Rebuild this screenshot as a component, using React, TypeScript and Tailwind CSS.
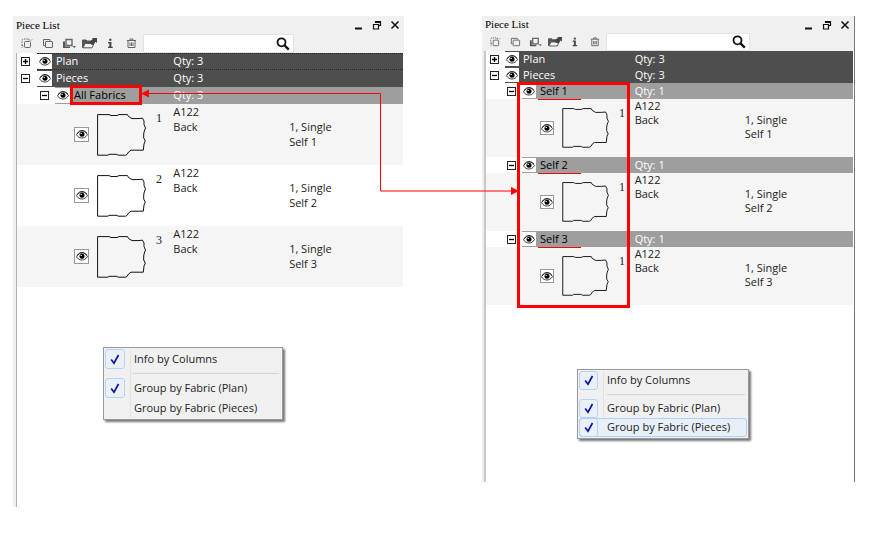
import React, { useState } from 'react';
import { clsx } from 'clsx';

interface Piece {
  id: string;
  order: number;
  name: string;
  part: string;
  quantity: string;
  fabric: string;
}

interface FabricGroup {
  name: string;
  qty: number;
  pieces: Piece[];
}

interface MenuOption {
  label: string;
  checked: boolean;
  active?: boolean;
}

const makePiece = (order: number, fabricNo: number): Piece => ({
  id: `piece-${order}-${fabricNo}`,
  order,
  name: 'A122',
  part: 'Back',
  quantity: '1, Single',
  fabric: `Self ${fabricNo}`,
});

const ALL_FABRICS: FabricGroup[] = [
  { name: 'All Fabrics', qty: 3, pieces: [makePiece(1, 1), makePiece(2, 2), makePiece(3, 3)] },
];

const BY_FABRIC: FabricGroup[] = [
  { name: 'Self 1', qty: 1, pieces: [makePiece(1, 1)] },
  { name: 'Self 2', qty: 1, pieces: [makePiece(1, 2)] },
  { name: 'Self 3', qty: 1, pieces: [makePiece(1, 3)] },
];

const EyeIcon = () => (
  <svg viewBox="0 0 12 9" className="w-3 h-[9px]" aria-hidden="true">
    <path d="M0.5 4.8C2.5 1.8 4.2 1 6 1s3.8 0.8 5.5 3.6C9.8 7.2 8 8 6 8S2.2 7.4 0.5 4.8Z" fill="#fff" stroke="#111" strokeWidth="0.8" />
    <path d="M1 3.4C3 0.9 4.4 0.5 6 0.5s3.4 0.6 5 2.6" fill="none" stroke="#111" strokeWidth="0.8" />
    <circle cx="6" cy="4.3" r="2.5" fill="#000" />
    <circle cx="5.2" cy="3.4" r="0.7" fill="#fff" />
  </svg>
);

const SearchIcon = () => (
  <svg viewBox="0 0 14 14" className="w-3.5 h-3.5" fill="none" stroke="#111" aria-hidden="true">
    <circle cx="5.5" cy="5.3" r="4" strokeWidth="1.8" />
    <path d="M8.5 8.4l4.3 4.2" strokeWidth="2.2" />
  </svg>
);

const PieceShape = ({ dense }: { dense: boolean }) => (
  <svg viewBox="0 0 50 42" className={dense ? 'w-12 h-10' : 'w-[50px] h-[42px]'} fill="none" stroke="#111" aria-hidden="true">
    <path d="M0.6 0.6H12L14 1.5H20L22 0.6H30.5L31.5 2.5L35 4.6H41L45.5 4.2L47 7V10.5L48.5 14L47.3 17L46.7 20V24L48.3 27L47 30L46.3 36.2H34L31.5 38L30 40.5L28.5 41.2H21L20 40.3H12L11 41.2H0.6Z" />
  </svg>
);

const TOOLS = [
  {
    label: 'Select',
    icon: (
      <>
        <rect x="4.5" y="4.5" width="6" height="6" rx="1" />
        <path d="M2 8.5V3.500C2 2.500 2.500 2 3.500 2H9" strokeDasharray="1.5 1" />
        <path d="M2 8.500h1M9 2v1.500M11 3.500l1-1M2 10.500l1-1" />
      </>
    ),
  },
  {
    label: 'Copy',
    icon: (
      <>
        <path d="M4 8.500H2.500V2.500h6.500V4" />
        <rect x="4.5" y="4.5" width="7" height="6" rx="0.5" />
      </>
    ),
  },
  {
    label: 'Arrange',
    icon: (
      <>
        <path d="M4 2.500h6v6H4z" strokeWidth="1.4" />
        <path d="M1 4.500h2v5h5v1.500H1z" fill="#555" stroke="none" />
        <path d="M10.500 9h3.500l-1.700 2.200z" fill="#666" stroke="none" />
      </>
    ),
  },
  {
    label: 'Open',
    icon: (
      <>
        <path d="M-0.500 10.500V3h3.500l1 1h3v2H2z" fill="#555" stroke="#555" />
        <path d="M0 10.800L2.200 6.500h8.800L9 10.800z" fill="#f4f4f4" stroke="#555" />
        <path d="M6.500 6.500c0-2.500 1.200-3.700 3-4V1h4.500v5l-1.500-1.200C11.500 6.500 10.500 7.500 9.500 8z" fill="#444" stroke="none" />
      </>
    ),
  },
  {
    label: 'Information',
    icon: (
      <g stroke="none" fill="#444">
        <rect x="5.2" y="1.8" width="2.2" height="2" />
        <path d="M4 5h3.400v4.700h1.300V11H4V9.700h1.300V6.300H4z" />
      </g>
    ),
  },
  {
    label: 'Delete',
    icon: <path d="M2 3.500h9M5 3.500V2h3v1.500M3 3.500v7h7v-7M5 5.500v3.500M6.500 5.500v3.500M8 5.500v3.500" />,
  },
];

const TreeToggle = ({ open, onClick, label }: { open: boolean; onClick: () => void; label: string }) => (
  <button type="button" onClick={onClick} aria-label={`${open ? 'Collapse' : 'Expand'} ${label}`} aria-expanded={open} className="shrink-0">
    <svg viewBox="0 0 9 9" className="block w-[9px] h-[9px]" fill="#fff" stroke="#222" aria-hidden="true">
      <rect x="0.5" y="0.5" width="8" height="8" />
      <path d={open ? 'M2 4.5h5' : 'M2 4.5h5M4.5 2v5'} stroke="#000" strokeWidth="1.3" />
    </svg>
  </button>
);

const EyeButton = ({ label, dense, framed }: { label: string; dense: boolean; framed?: boolean }) => {
  const [visible, setVisible] = useState(true);
  return (
    <button
      type="button"
      aria-label={`Show ${label}`}
      aria-pressed={visible}
      onClick={() => setVisible(!visible)}
      className={clsx(
        'shrink-0 flex items-center justify-center bg-white',
        dense ? 'w-3.5 h-3.5' : 'w-[15px] h-[15px]',
        framed && 'border border-[#999]'
      )}
    >
      <span className={visible ? 'block' : 'invisible'}>
        <EyeIcon />
      </span>
    </button>
  );
};

interface HeadRowProps {
  label: string;
  qty: number;
  open: boolean;
  onToggle: () => void;
  dense: boolean;
  nested?: boolean;
  focused?: boolean;
  boxed?: boolean;
  underlined?: boolean;
}

const HeadRow = ({ label, qty, open, onToggle, dense, nested, focused, boxed, underlined }: HeadRowProps) => {
  const fill = nested ? 'bg-[#9e9e9e]' : 'bg-[#4e4e4e]';
  const outline = focused && 'border-y border-dotted border-[#222]';
  return (
    <tr>
      <td className="p-0">
        <div className={clsx('flex', dense ? 'h-4' : 'h-[17px]')}>
          <div
            className={clsx(
              'shrink-0 flex items-center justify-end',
              !nested && (dense ? 'w-[19px] pr-1.5' : 'w-5 pr-[7px]'),
              nested && (dense ? 'w-9 pr-1.5' : 'w-[38px] pr-1.5')
            )}
          >
            <TreeToggle open={open} onClick={onToggle} label={label} />
          </div>
          <div className={clsx('relative flex-1 flex items-center gap-1', fill, outline)}>
            <EyeButton label={label} dense={dense} />
            <span className={nested ? 'text-black' : 'text-white'}>{label}</span>
            {boxed && <span className="absolute left-[15px] -top-0.5 w-[72px] h-5 border-[3px] border-[#f00]" />}
            {underlined && <span className="absolute z-10 left-4 top-full w-[43px] h-px bg-[#f00]" />}
          </div>
        </div>
      </td>
      <td colSpan={2} className="p-0">
        <div className={clsx('flex items-center text-white', dense ? 'h-4' : 'h-[17px]', fill, outline)}>Qty: {qty}</div>
      </td>
    </tr>
  );
};

const PieceRow = ({ piece, dense, shaded }: { piece: Piece; dense: boolean; shaded: boolean }) => (
  <tr className={clsx('align-top text-[#222]', shaded ? 'bg-[#f5f5f5]' : 'bg-white', dense ? 'leading-[14px]' : 'leading-[15px]')}>
    <td className="p-0">
      <div className={clsx('flex items-center gap-2', dense ? 'h-[58px] pl-[54px]' : 'h-[61px] pl-[57px]')}>
        <EyeButton label={`${piece.name} ${piece.fabric}`} dense={dense} framed />
        <PieceShape dense={dense} />
        <span className="self-start mt-1.5 ml-px font-['Liberation_Serif',serif] text-xs">{piece.order}</span>
      </div>
    </td>
    <td className="p-0">
      <p>{piece.name}</p>
      <p>{piece.part}</p>
    </td>
    <td className={clsx('p-0', dense ? 'pt-3.5' : 'pt-[15px]')}>
      <p>{piece.quantity}</p>
      <p>{piece.fabric}</p>
    </td>
  </tr>
);

const ContextMenu = ({ options, dense, className }: { options: MenuOption[]; dense: boolean; className: string }) => (
  <div role="menu" className={clsx('absolute border border-[#999] bg-[#f0f0f0] p-px text-[#222] shadow-[2px_2px_2px_#777]', className)}>
    <span className={clsx('absolute inset-y-0.5 w-px bg-[#e2e2e2]', dense ? 'left-[25px]' : 'left-[26px]')} />
    {options.map((option, i) => (
      <React.Fragment key={option.label}>
        <button
          type="button"
          role="menuitemcheckbox"
          aria-checked={option.checked}
          className={clsx(
            'relative flex items-center gap-[9px] w-full text-left rounded-[3px]',
            dense ? 'h-[19px]' : 'h-5',
            option.active && 'bg-[#e8eff8] outline outline-[#aecff7] -outline-offset-1'
          )}
        >
          <span
            className={clsx(
              'shrink-0 flex items-center justify-center rounded-[3px]',
              dense ? 'w-[19px] h-[19px]' : 'w-5 h-5',
              option.checked && 'border border-[#b5d3f5] bg-[#e9f0f8]'
            )}
          >
            {option.checked && (
              <svg viewBox="0 0 10 11" className="w-2.5 h-[11px]" fill="none" stroke="#1212a0" aria-hidden="true">
                <path d="M1.200 5.500L4 9.200 8.500 1" strokeWidth="1.700" />
              </svg>
            )}
          </span>
          {option.label}
        </button>
        {i === 0 && <div className="h-[9px] pt-1 pl-7 pr-0.5"><hr className="border-[#d5d5d5]" /></div>}
      </React.Fragment>
    ))}
  </div>
);

interface PieceListPanelProps {
  groups: FabricGroup[];
  dense?: boolean;
  children?: React.ReactNode;
}

const PieceListPanel = ({ groups, dense = false, children }: PieceListPanelProps) => {
  const [closed, setClosed] = useState<string[]>(['Plan']);
  const [query, setQuery] = useState('');

  const toggle = (name: string) => {
    setClosed(closed.includes(name) ? closed.filter(n => n !== name) : [...closed, name]);
  };
  const isOpen = (name: string) => !closed.includes(name);

  return (
    <section className={clsx("relative self-start font-['Open_Sans',sans-serif] text-[11px]", dense && 'border-r border-[#6d7b8a]')}>
      <header className="bg-[#f0f0f0]">
        <div className={clsx('flex items-center justify-between pl-[3px] pr-1', dense ? 'h-[17px]' : 'h-[18px]')}>
          <h2 className="font-['Liberation_Serif',serif] text-[11px] text-black">Piece List</h2>
          <div className="flex items-center gap-2">
            {[
              { label: 'Minimize', d: 'M1 8.500h7', w: 2 },
              { label: 'Restore', d: 'M3.500 1v2M3 1.500h6M8.500 1v5M3 2.500h6M6.500 5.500h2M1.500 4v5h5V4M1 4.500h6', w: 1.2 },
              { label: 'Close', d: 'M1.500 1.500l7 7M8.500 1.500l-7 7', w: 1.5 },
            ].map(action => (
              <button key={action.label} type="button" aria-label={action.label}>
                <svg viewBox="0 0 10 10" className="block w-2.5 h-2.5" fill="none" stroke="#111" strokeWidth={action.w} aria-hidden="true">
                  <path d={action.d} />
                </svg>
              </button>
            ))}
          </div>
        </div>
        <div className={clsx('flex items-center pl-[3px]', dense ? 'h-[18px]' : 'h-[19px]')}>
          {TOOLS.map(tool => (
            <button
              key={tool.label}
              type="button"
              aria-label={tool.label}
              className={clsx('flex justify-center', dense ? 'w-5' : 'w-[21px]')}
            >
              <svg viewBox="0 0 13 13" className={clsx('overflow-visible', dense ? 'w-3 h-3' : 'w-[13px] h-[13px]')} fill="none" stroke="#666" aria-hidden="true">
                {tool.icon}
              </svg>
            </button>
          ))}
          <div className="relative self-stretch w-[39%] ml-px">
            <input
              type="text"
              aria-label="Search pieces"
              value={query}
              onChange={(e) => setQuery(e.target.value)}
              className="w-full h-full pl-1 pr-6 bg-white border border-[#e0e4ea] outline-none"
            />
            <button type="button" aria-label="Search" className="absolute right-1 inset-y-0 flex items-center">
              <SearchIcon />
            </button>
          </div>
        </div>
      </header>

      <div className={clsx('flex', dense ? 'min-h-[431px]' : 'min-h-[454px]')}>
        <div className={clsx('shrink-0 w-1 bg-[#efefef]', dense ? 'border-r-2 border-[#c8c8c8]' : 'border-r border-[#b0b0b0]')} />
        <div className="flex-1 pr-px">
          <table className="w-full table-fixed border-collapse">
            <colgroup>
              <col className="w-[40.5%]" />
              <col className="w-[30%]" />
              <col className="w-[29.5%]" />
            </colgroup>
            <tbody>
              <HeadRow label="Plan" qty={3} open={isOpen('Plan')} onToggle={() => toggle('Plan')} dense={dense} focused={!dense} />
              <HeadRow label="Pieces" qty={3} open={isOpen('Pieces')} onToggle={() => toggle('Pieces')} dense={dense} />
              {isOpen('Pieces') && groups.map(group => (
                <React.Fragment key={group.name}>
                  <HeadRow
                    label={group.name}
                    qty={group.qty}
                    open={isOpen(group.name)}
                    onToggle={() => toggle(group.name)}
                    dense={dense}
                    nested
                    boxed={!dense}
                    underlined={dense}
                  />
                  {isOpen(group.name) && group.pieces.map((piece, i) => (
                    <PieceRow key={piece.id} piece={piece} dense={dense} shaded={i % 2 === 0} />
                  ))}
                </React.Fragment>
              ))}
            </tbody>
          </table>
        </div>
      </div>
      {children}
    </section>
  );
};

export default function App() {
  return (
    <main className="relative grid grid-cols-[391fr_373fr] gap-[78px] min-h-screen pt-4 pl-[13px] pr-4 bg-white">
      <PieceListPanel groups={ALL_FABRICS}>
        <ContextMenu
          dense={false}
          className="left-[90px] top-[331px] w-[180px]"
          options={[
            { label: 'Info by Columns', checked: true },
            { label: 'Group by Fabric (Plan)', checked: true },
            { label: 'Group by Fabric (Pieces)', checked: false },
          ]}
        />
      </PieceListPanel>

      <PieceListPanel groups={BY_FABRIC} dense>
        <span className="absolute z-10 left-[35px] top-[66px] w-[113px] h-[226px] border-[3px] border-[#f00] pointer-events-none" />
        <ContextMenu
          dense
          className="left-[95px] top-[353px] w-[172px]"
          options={[
            { label: 'Info by Columns', checked: true },
            { label: 'Group by Fabric (Plan)', checked: true },
            { label: 'Group by Fabric (Pieces)', checked: true, active: true },
          ]}
        />
      </PieceListPanel>

      {/* connector between the grouped row and the per-fabric groups */}
      <svg viewBox="0 0 380 108" className="absolute left-[140px] top-[88px] w-[380px] h-[108px] pointer-events-none" aria-hidden="true">
        <path d="M8 5.500H240.500V103H372" fill="none" stroke="#f00" />
        <path d="M1 5.500l8-4v8zM379 103l-8-4v8z" fill="#f00" />
      </svg>
    </main>
  );
}
